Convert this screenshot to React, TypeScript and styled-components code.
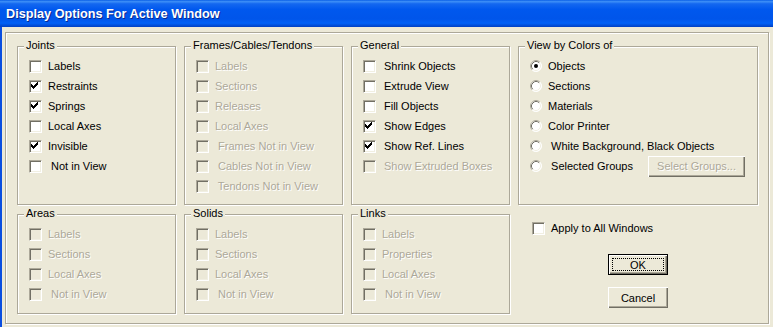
import styled, { createGlobalStyle } from 'styled-components';

const FACE = '#ece9d8';
const SHADOW = '#aca899';
const DARK = '#716f64';

const GlobalStyle = createGlobalStyle`
  body {
    margin: 0;
    background: ${FACE};
    font-family: "Liberation Sans", Arial, sans-serif;
    font-size: 11px;
  }
`;

const Window = styled.div`
  width: 773px;
  height: 327px;
  background: ${FACE};
  display: flex;
  flex-direction: column;
  overflow: hidden;
`;

const TitleBar = styled.div`
  height: 27px;
  flex-shrink: 0;
  display: flex;
  align-items: center;
  padding: 1px 0 0 6px;
  box-sizing: border-box;
  background: linear-gradient(
    to bottom,
    #0a5fe6 0%,
    #3d8ff7 6%,
    #1468f0 14%,
    #0058ee 35%,
    #0055ea 70%,
    #0060f6 86%,
    #0050dc 93%,
    #003fc2 100%
  );
  color: #fff;
  font-weight: bold;
  font-size: 12.7px;
  text-shadow: 1px 1px 0 #0a2a8e;
`;

const Body = styled.div`
  flex: 1;
  border-left: 2px solid #0a4ee0;
  padding: 5px 0 0 3px;
`;

const Frame = styled.div`
  width: 764px;
  height: 292px;
  box-sizing: border-box;
  border: 1px solid ${SHADOW};
  box-shadow: inset 1px 1px 0 #fff, 1px 1px 0 #fff;
  padding: 13px 0 0 11px;
  display: grid;
  grid-template-columns: 159px 159px 159px 240px;
  grid-template-rows: 159px 100px;
  column-gap: 8px;
  row-gap: 9px;
`;

const Group = styled.div<{ $gap?: number }>`
  position: relative;
  box-sizing: border-box;
  border: 1px solid ${SHADOW};
  box-shadow: inset 1px 1px 0 #fff, 1px 1px 0 #fff;
  padding: 9px 0 0 11px;
  display: flex;
  flex-direction: column;
  --label-gap: ${(p) => p.$gap ?? 6}px;
`;

const Legend = styled.span`
  position: absolute;
  top: -8px;
  left: 6px;
  padding: 0 2px;
  line-height: 13px;
  background: ${FACE};
  color: #000;
`;

const Row = styled.div`
  height: 20px;
  display: flex;
  align-items: center;
  gap: var(--label-gap, 6px);
`;

const Label = styled.span<{ $disabled?: boolean }>`
  white-space: pre;
  color: ${(p) => (p.$disabled ? SHADOW : '#000')};
  text-shadow: ${(p) => (p.$disabled ? '1px 1px 0 #fff' : 'none')};
`;

const Box = styled.span<{ $disabled?: boolean }>`
  width: 13px;
  height: 13px;
  flex-shrink: 0;
  box-sizing: border-box;
  border: 1px solid;
  border-color: ${SHADOW} #fff #fff ${SHADOW};
  box-shadow: inset 1px 1px 0 ${DARK}, inset -1px -1px 0 #f1efe2;
  background: ${(p) => (p.$disabled ? FACE : '#fff')};
`;

const Button = styled.button<{ $default?: boolean; $w: number }>`
  width: ${(p) => p.$w}px;
  height: 21px;
  padding: 0;
  box-sizing: border-box;
  background: ${FACE};
  font: 11px "Liberation Sans", Arial, sans-serif;
  color: #000;
  border: ${(p) => (p.$default ? '1px solid #000' : 'none')};
  box-shadow: inset 1px 1px 0 #fff, inset -1px -1px 0 ${DARK},
    inset -2px -2px 0 ${SHADOW};
  display: flex;
  align-items: center;
  justify-content: center;

  &:disabled {
    color: ${SHADOW};
    text-shadow: 1px 1px 0 #fff;
  }
`;

const Focus = styled.span`
  align-self: stretch;
  flex: 1;
  margin: 3px;
  border: 1px dotted #000;
  display: flex;
  align-items: center;
  justify-content: center;
`;

const PushRight = styled.div`
  margin-left: auto;
  margin-right: 12px;
`;

const ActionCell = styled.div`
  display: flex;
  flex-direction: column;
  align-items: center;
`;

const ApplyRow = styled(Row)`
  align-self: flex-start;
  margin: 4px 0 0 14px;
`;

const OkWrap = styled.div`
  margin-top: 16px;
`;

const CancelWrap = styled.div`
  margin-top: 12px;
`;

const CHECK_COLS: [number, number][] = [
  [2, 4],
  [3, 5],
  [4, 6],
  [5, 5],
  [6, 4],
  [7, 3],
  [8, 2],
];

const Check = ({ checked, disabled }: { checked?: boolean; disabled?: boolean }) => (
  <Box $disabled={disabled}>
    {checked && (
      <svg width="11" height="11" viewBox="0 0 11 11" shapeRendering="crispEdges" style={{ display: 'block' }}>
        {CHECK_COLS.map(([x, y]) => (
          <rect key={x} x={x - 1} y={y - 1} width="1" height="3" fill="#000" />
        ))}
      </svg>
    )}
  </Box>
);

const Radio = ({ selected }: { selected?: boolean }) => (
  <svg width="12" height="12" viewBox="0 0 12 12" style={{ flexShrink: 0 }}>
    <circle cx="6" cy="6" r="5.5" fill="#fff" />
    <path d="M2.11 9.89 A5.5 5.5 0 0 1 9.89 2.11" stroke={SHADOW} fill="none" />
    <path d="M9.89 2.11 A5.5 5.5 0 0 1 2.11 9.89" stroke="#fff" fill="none" />
    <path d="M2.82 9.18 A4.5 4.5 0 0 1 9.18 2.82" stroke={DARK} fill="none" />
    <path d="M9.18 2.82 A4.5 4.5 0 0 1 2.82 9.18" stroke="#f1efe2" fill="none" />
    {selected && <circle cx="6" cy="6" r="2" fill="#000" />}
  </svg>
);

type Item = { label: string; checked?: boolean; disabled?: boolean };

const CheckGroup = ({
  title,
  items,
  disabled,
  gap,
}: {
  title: string;
  items: Item[];
  disabled?: boolean;
  gap?: number;
}) => (
  <Group $gap={gap}>
    <Legend>{title}</Legend>
    {items.map((it) => {
      const off = disabled || it.disabled;
      return (
        <Row key={it.label}>
          <Check checked={it.checked} disabled={off} />
          <Label $disabled={off}>{it.label}</Label>
        </Row>
      );
    })}
  </Group>
);

const joints: Item[] = [
  { label: 'Labels' },
  { label: 'Restraints', checked: true },
  { label: 'Springs', checked: true },
  { label: 'Local Axes' },
  { label: 'Invisible', checked: true },
  { label: ' Not in View' },
];

const frames: Item[] = [
  { label: 'Labels' },
  { label: 'Sections' },
  { label: 'Releases' },
  { label: 'Local Axes' },
  { label: ' Frames Not in View' },
  { label: ' Cables Not in View' },
  { label: ' Tendons Not in View' },
];

const general: Item[] = [
  { label: 'Shrink Objects' },
  { label: 'Extrude View' },
  { label: 'Fill Objects' },
  { label: 'Show Edges', checked: true },
  { label: 'Show Ref. Lines', checked: true },
  { label: 'Show Extruded Boxes', disabled: true },
];

const basic = (second: string): Item[] => [
  { label: 'Labels' },
  { label: second },
  { label: 'Local Axes' },
  { label: ' Not in View' },
];

const colorModes = [
  'Objects',
  'Sections',
  'Materials',
  'Color Printer',
  ' White Background, Black Objects',
];

export default function App() {
  return (
    <Window>
      <GlobalStyle />
      <TitleBar>Display Options For Active Window</TitleBar>
      <Body>
        <Frame>
          <CheckGroup title="Joints" items={joints} />
          <CheckGroup title="Frames/Cables/Tendons" items={frames} disabled />
          <CheckGroup title="General" items={general} gap={8} />
          <Group>
            <Legend>View by Colors of</Legend>
            {colorModes.map((m, i) => (
              <Row key={m}>
                <Radio selected={i === 0} />
                <Label>{m}</Label>
              </Row>
            ))}
            <Row>
              <Radio />
              <Label> Selected Groups</Label>
              <PushRight>
                <Button $w={97} disabled>
                  Select Groups...
                </Button>
              </PushRight>
            </Row>
          </Group>
          <CheckGroup title="Areas" items={basic('Sections')} disabled />
          <CheckGroup title="Solids" items={basic('Sections')} disabled />
          <CheckGroup title="Links" items={basic('Properties')} disabled />
          <ActionCell>
            <ApplyRow>
              <Check />
              <Label>Apply to All Windows</Label>
            </ApplyRow>
            <OkWrap>
              <Button $w={60} $default>
                <Focus>OK</Focus>
              </Button>
            </OkWrap>
            <CancelWrap>
              <Button $w={60}>Cancel</Button>
            </CancelWrap>
          </ActionCell>
        </Frame>
      </Body>
    </Window>
  );
}
